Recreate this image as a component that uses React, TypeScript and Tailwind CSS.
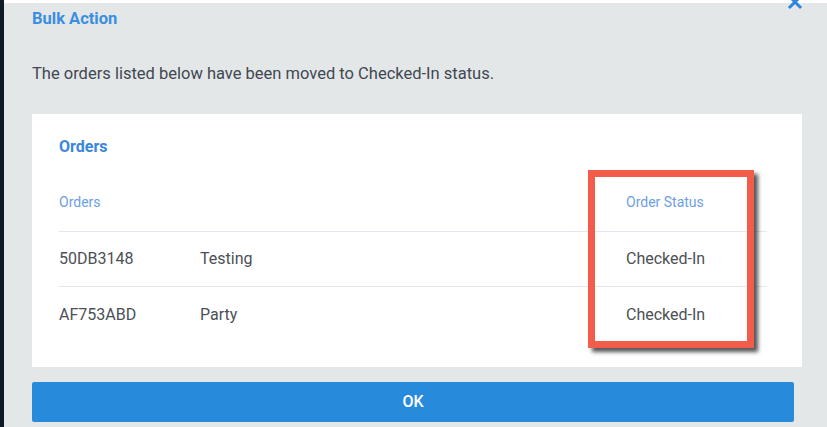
import React from 'react';

const rows = [
  { id: '50DB3148', name: 'Testing', status: 'Checked-In' },
  { id: 'AF753ABD', name: 'Party', status: 'Checked-In' },
];

export default function App() {
  return (
    <div
      className="relative flex w-[827px] h-[427px] overflow-hidden bg-[#e4e7e8]"
      style={{ fontFamily: 'Roboto, "Liberation Sans", sans-serif' }}
    >
      {/* dark edge of the page behind the dialog */}
      <div className="w-[4px] shrink-0 bg-[#0e1b27]" />

      <div className="flex-1 flex flex-col border-t-[3px] border-white pl-[28px]">
        <div className="mt-[6px] h-[20px] leading-[20px] text-[16.5px] font-bold text-[#3b8ee2]">Bulk Action</div>

        <p className="mt-[33px] h-[24px] leading-[24px] text-[16.5px] text-[#3f4851]">
          The orders listed below have been moved to Checked-In status.
        </p>

        {/* card */}
        <div className="mt-[28px] w-[770px] h-[253px] bg-white pl-[27px] pt-[21px]">
          <div className="h-[24px] leading-[24px] text-[16px] font-bold text-[#3a86dc]">Orders</div>

          <div className="w-[708px] mt-[33px]">
            <div className="grid grid-cols-[141px_426px_1fr] pb-[19px] border-b border-[#e3e8ee] text-[14px] leading-[20px] text-[#6c9fe6]">
              <span>Orders</span>
              <span />
              <span>Order Status</span>
            </div>
            {rows.map((r, i) => (
              <div
                key={r.id}
                className={
                  'grid grid-cols-[141px_426px_1fr] items-center h-[55px] text-[16px] text-[#4b5056] ' +
                  (i === 0 ? 'border-b border-[#e3e8ee]' : '')
                }
              >
                <span>{r.id}</span>
                <span>{r.name}</span>
                <span>{r.status}</span>
              </div>
            ))}
          </div>
        </div>

        <button className="mt-[15px] w-[762px] h-[40px] rounded-[2px] bg-[#288adb] text-white text-[16px] font-medium">
          OK
        </button>
      </div>

      {/* close icon, cut off at the top */}
      <svg className="absolute left-[787px] top-[-6px]" width="16" height="16" viewBox="0 0 16 16">
        <path d="M3 3 L13 13 M13 3 L3 13" stroke="#2d86dc" strokeWidth="3" strokeLinecap="square" fill="none" />
      </svg>

      {/* red annotation box */}
      <div className="absolute left-[588px] top-[170px] w-[166px] h-[178px] border-[7px] border-[#f25c4b] shadow-[4px_4px_4px_rgba(30,30,30,0.75)]" />
    </div>
  );
}
